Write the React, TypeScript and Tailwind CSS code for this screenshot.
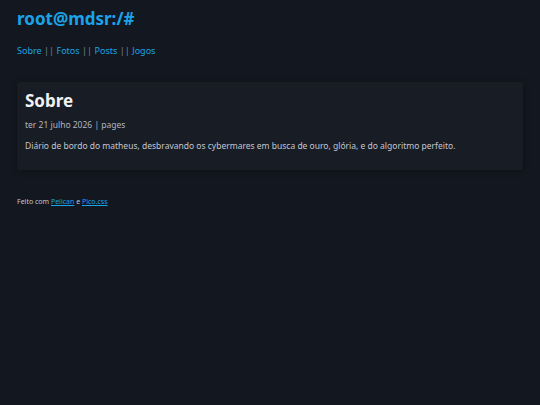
export default function App() {
  return (
    <div
      className="min-h-[405px] bg-[#13171f] text-[#c2c7d0] px-[17px]"
      style={{ fontFamily: '"Noto Sans", sans-serif' }}
    >
      <header className="pt-[7px]">
        <h1 className="text-[17px] font-bold leading-[24px] text-[#1ba3e8]">root@mdsr:/#</h1>
        <nav className="mt-[13px] text-[9px] leading-[14px] text-[#1ba3e8] flex gap-[2.5px]">
          <a>Sobre</a>
          <span className="text-[#7b8495]">||</span>
          <a>Fotos</a>
          <span className="text-[#7b8495]">||</span>
          <a>Posts</a>
          <span className="text-[#7b8495]">||</span>
          <a>Jogos</a>
        </nav>
      </header>
      <main className="mt-[24px]">
        <article className="bg-[#181c25] rounded-[3px] shadow-[0_1px_6px_rgba(0,0,0,0.35)] px-[8px] pt-[8px] pb-[18px]">
          <h2 className="text-[17px] font-bold leading-[22px] text-[#f0f1f3]">Sobre</h2>
          <p className="mt-[7px] text-[8.5px] leading-[12px] text-[#b0b6c0]">ter 21 julho 2026 | pages</p>
          <p className="mt-[9px] text-[8.5px] leading-[12px] text-[#c2c7d0]">
            Diário de bordo do matheus, desbravando os cybermares em busca de ouro, glória, e do algoritmo perfeito.
          </p>
        </article>
      </main>
      <footer className="mt-[27px] text-[7px] leading-[10px] text-[#c2c7d0]">
        Feito com <a className="underline text-[#1ba3e8]">Pelican</a> e <a className="underline text-[#1ba3e8]">Pico.css</a>
      </footer>
    </div>
  );
}
